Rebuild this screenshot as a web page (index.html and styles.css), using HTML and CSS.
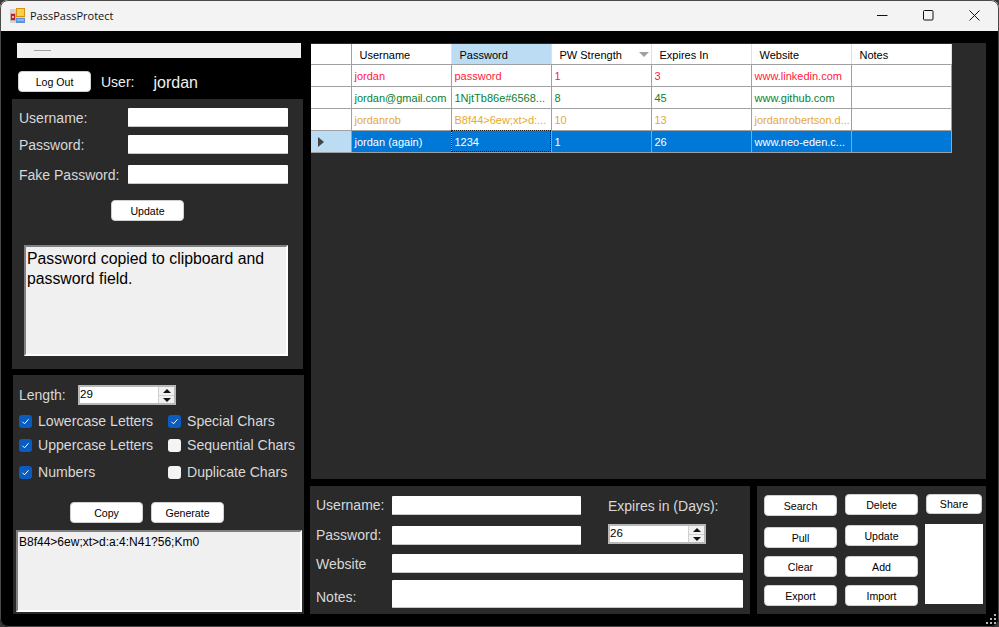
FILE: index.html
```html
<!DOCTYPE html>
<html lang="en">
<head>
    <meta charset="UTF-8">
    <meta name="viewport" content="width=device-width, initial-scale=1.0">
    <title>PassPassProtect</title>
    <link rel="stylesheet" href="styles.css">
</head>
<body>
<div class="window">
    <div class="titlebar">
        <svg class="app-icon" width="15" height="15" viewBox="0 0 15 15">
            <rect x="0" y="1" width="15" height="14" fill="#d4d4d4"/>
            <rect x="0" y="5" width="6" height="8" fill="#b8b8b8"/>
            <rect x="1" y="6" width="4" height="6" fill="#c42020"/>
            <rect x="2" y="8" width="2" height="2" fill="#f0c0a0"/>
            <rect x="6" y="0" width="9" height="9" fill="#d89010"/>
            <rect x="7" y="1" width="7" height="7" fill="#f8d050"/>
            <rect x="6" y="10" width="9" height="5" fill="#6090d8"/>
            <rect x="7" y="11" width="7" height="2" fill="#90b8f0"/>
        </svg>
        <span class="app-title">PassPassProtect</span>
        <div class="window-controls">
            <svg class="win-btn" width="11" height="11" viewBox="0 0 11 11"><path d="M0 5.5h10.5" stroke="#111" fill="none"/></svg>
            <svg class="win-btn" width="11" height="11" viewBox="0 0 11 11"><rect x=".5" y=".5" width="9.5" height="9.5" rx="1" stroke="#111" fill="none"/></svg>
            <svg class="win-btn" width="11" height="11" viewBox="0 0 11 11"><path d="M.5.5l10 10M10.5.5l-10 10" stroke="#111" fill="none"/></svg>
        </div>
    </div>

    <div class="content">
        <div class="left-col">
            <div class="menu-strip"><span class="menu-dash"></span></div>
            <div class="user-bar">
                <button class="btn">Log Out</button>
                <span class="user-label">User:</span>
                <span class="user-name">jordan</span>
            </div>

            <div class="panel account-panel">
                <div class="field-row row-user"><label>Username:</label><input type="text" class="text-input"></div>
                <div class="field-row row-pass"><label>Password:</label><input type="text" class="text-input"></div>
                <div class="field-row row-fake"><label>Fake Password:</label><input type="text" class="text-input"></div>
                <button class="btn update-btn">Update</button>
                <div class="message-box">Password copied to clipboard and password field.</div>
            </div>

            <div class="panel generator-panel">
                <div class="length-row">
                    <label>Length:</label>
                    <div class="spinner">
                        <span class="spinner-value">29</span>
                        <span class="spinner-arrows"><i class="arrow-up"></i><i class="arrow-down"></i></span>
                    </div>
                </div>
                <div class="check-grid">
                    <div class="check-item"><span class="check on"><svg width="9" height="9" viewBox="0 0 9 9"><path d="M1.5 4.8l2 2 4-4.5" stroke="#fff" fill="none"/></svg></span>Lowercase Letters</div>
                    <div class="check-item"><span class="check on"><svg width="9" height="9" viewBox="0 0 9 9"><path d="M1.5 4.8l2 2 4-4.5" stroke="#fff" fill="none"/></svg></span>Special Chars</div>
                    <div class="check-item"><span class="check on"><svg width="9" height="9" viewBox="0 0 9 9"><path d="M1.5 4.8l2 2 4-4.5" stroke="#fff" fill="none"/></svg></span>Uppercase Letters</div>
                    <div class="check-item"><span class="check"></span>Sequential Chars</div>
                    <div class="check-item check-last"><span class="check on"><svg width="9" height="9" viewBox="0 0 9 9"><path d="M1.5 4.8l2 2 4-4.5" stroke="#fff" fill="none"/></svg></span>Numbers</div>
                    <div class="check-item check-last"><span class="check"></span>Duplicate Chars</div>
                </div>
                <div class="generate-row">
                    <button class="btn">Copy</button>
                    <button class="btn">Generate</button>
                </div>
                <div class="output-box">B8f44&gt;6ew;xt&gt;d:a:4:N41?56;Km0</div>
            </div>
        </div>

        <div class="right-col">
            <div class="panel grid-panel">
                <table class="data-grid">
                    <thead>
                        <tr>
                            <th class="row-head"></th>
                            <th>Username</th>
                            <th class="col-selected">Password</th>
                            <th class="sorted">PW Strength<i class="sort-arrow"></i></th>
                            <th>Expires In</th>
                            <th>Website</th>
                            <th>Notes</th>
                        </tr>
                    </thead>
                    <tbody>
                        <tr class="weak">
                            <td class="row-head"></td>
                            <td>jordan</td><td>password</td><td>1</td><td>3</td><td>www.linkedin.com</td><td></td>
                        </tr>
                        <tr class="strong">
                            <td class="row-head"></td>
                            <td>jordan@gmail.com</td><td>1NjtTb86e#6568...</td><td>8</td><td>45</td><td>www.github.com</td><td></td>
                        </tr>
                        <tr class="expiring">
                            <td class="row-head"></td>
                            <td>jordanrob</td><td>B8f44&gt;6ew;xt&gt;d:...</td><td>10</td><td>13</td><td>jordanrobertson.d...</td><td></td>
                        </tr>
                        <tr class="selected">
                            <td class="row-head"><i class="row-arrow"></i></td>
                            <td>jordan (again)</td><td class="cell-focus">1234</td><td>1</td><td>26</td><td>www.neo-eden.c...</td><td></td>
                        </tr>
                    </tbody>
                </table>
            </div>

            <div class="bottom-row">
                <div class="panel entry-panel">
                    <div class="entry-top">
                        <div class="entry-labels">
                            <div class="entry-row entry-user"><label>Username:</label><input type="text" class="text-input short-input"></div>
                            <div class="entry-row entry-pass"><label>Password:</label><input type="text" class="text-input short-input"></div>
                        </div>
                        <div class="expires-box">
                            <label>Expires in (Days):</label>
                            <div class="spinner">
                                <span class="spinner-value">26</span>
                                <span class="spinner-arrows"><i class="arrow-up"></i><i class="arrow-down"></i></span>
                            </div>
                        </div>
                    </div>
                    <div class="entry-row entry-site"><label>Website</label><input type="text" class="text-input wide-input"></div>
                    <div class="entry-row entry-notes"><label>Notes:</label><input type="text" class="text-input wide-input notes-input"></div>
                </div>

                <div class="panel action-panel">
                    <div class="action-col col-a">
                        <button class="btn search-btn">Search</button>
                        <button class="btn pull-btn">Pull</button>
                        <button class="btn clear-btn">Clear</button>
                        <button class="btn export-btn">Export</button>
                    </div>
                    <div class="action-col col-b">
                        <button class="btn">Delete</button>
                        <button class="btn update-action">Update</button>
                        <button class="btn clear-btn">Add</button>
                        <button class="btn export-btn">Import</button>
                    </div>
                    <div class="action-col col-c">
                        <button class="btn share-btn">Share</button>
                        <div class="share-list"></div>
                    </div>
                </div>
            </div>
        </div>
    </div>

    <svg class="resize-grip" width="10" height="10" viewBox="0 0 10 10">
        <path d="M8 0h2v2H8zM4 4h2v2H4zM8 4h2v2H8zM0 8h2v2H0zM4 8h2v2H4zM8 8h2v2H8z" fill="#b8b8b8"/>
    </svg>
</div>
</body>
</html>
```

FILE: styles.css
```css
* {
    margin: 0;
    padding: 0;
    box-sizing: border-box;
}

body {
    font-family: "Liberation Sans", Arial, sans-serif;
    background-color: #3a3a3a;
    width: 999px;
    height: 627px;
    overflow: hidden;
}

.window {
    position: relative;
    width: 999px;
    height: 627px;
    background-color: #000;
    border-radius: 8px;
    overflow: hidden;
    display: flex;
    flex-direction: column;
}

/* thin window outline drawn over the title bar and body */
.window::after {
    content: "";
    position: absolute;
    inset: 0;
    border: 1px solid #4a4a4a;
    border-radius: 8px;
    pointer-events: none;
}

.titlebar {
    height: 31px;
    flex: none;
    background-color: #f3f3f3;
    display: flex;
    align-items: center;
    padding-left: 10px;
}

.app-icon {
    flex: none;
}

.app-title {
    font-family: "Open Sans", sans-serif;
    font-size: 11px;
    color: #111;
    margin-left: 5px;
}

.window-controls {
    margin-left: auto;
    display: flex;
    gap: 35px;
    padding-right: 19px;
}

.content {
    flex: 1;
    display: flex;
}

.panel {
    background-color: #2a2a2a;
}

label {
    font-size: 14px;
    color: #d8d8d8;
}

/* left column */

.left-col {
    width: 310px;
    flex: none;
    padding-top: 12px;
}

.menu-strip {
    margin-left: 17px;
    width: 284px;
    height: 15px;
    background-color: #f0f0f0;
    display: flex;
    align-items: center;
    padding-left: 17px;
}

.menu-dash {
    width: 17px;
    height: 1px;
    background-color: #a0a0a0;
}

.btn {
    width: 73px;
    height: 21px;
    background-color: #fff;
    border: 1px solid #d0d0d0;
    border-radius: 4px;
    font-family: "Liberation Sans", Arial, sans-serif;
    font-size: 10.6px;
    color: #000;
    flex: none;
}

.user-bar {
    margin: 13px 0 7px 18px;
    height: 21px;
    display: flex;
    align-items: center;
}

.user-label {
    font-size: 14px;
    color: #f0f0f0;
    margin-left: 10px;
}

.user-name {
    font-size: 16px;
    color: #f0f0f0;
    margin: 2px 0 0 19px;
}

.account-panel {
    margin-left: 12px;
    width: 291px;
    height: 270px;
    padding: 9px 15px 0 7px;
    display: flex;
    flex-direction: column;
}

.field-row {
    display: flex;
    align-items: center;
    justify-content: space-between;
    height: 19px;
}

.row-pass {
    margin-top: 8px;
}

.row-fake {
    margin-top: 11px;
}

.text-input {
    height: 19px;
    width: 160px;
    background-color: #fff;
    border: none;
    border-bottom: 1px solid #c8c8c8;
    border-radius: 1px;
}

.update-btn {
    margin: 16px 0 0 92px;
}

.message-box {
    margin: 24px 0 0 5px;
    width: 264px;
    height: 111px;
    background-color: #f0f0f0;
    border: 2px solid;
    border-color: #808080 #fff #fff #808080;
    padding: 2px 1px;
    font-size: 15.8px;
    line-height: 20px;
    color: #000;
}

.generator-panel {
    margin: 6px 0 0 13px;
    width: 291px;
    height: 239px;
    padding: 10px 0 0 6px;
}

.length-row {
    display: flex;
    align-items: center;
    height: 20px;
}

.length-row label {
    width: 59px;
}

.spinner {
    width: 98px;
    height: 20px;
    background-color: #fff;
    border: 2px solid #b8b8b8;
    display: flex;
    justify-content: space-between;
    font-size: 11.5px;
    line-height: 15px;
    color: #000;
}

.spinner-arrows {
    width: 16px;
    display: flex;
    flex-direction: column;
    gap: 1px;
    background-color: #d0d0d0;
    border-left: 1px solid #d0d0d0;
}

.spinner-arrows i {
    flex: 1;
    background-color: #f0f0f0;
    position: relative;
}

.spinner-arrows i::after {
    content: "";
    position: absolute;
    left: 4px;
    top: 2px;
    border-left: 4px solid transparent;
    border-right: 4px solid transparent;
}

.arrow-up::after {
    border-bottom: 4px solid #111;
}

.arrow-down::after {
    border-top: 4px solid #111;
}

.check-grid {
    margin-top: 4px;
    display: grid;
    grid-template-columns: 149px 1fr;
    grid-auto-rows: 24px;
}

.check-item {
    display: flex;
    align-items: center;
    font-size: 14.1px;
    color: #d8d8d8;
    white-space: nowrap;
}

.check-last {
    height: 24px;
    margin-top: 3px;
}

.check {
    width: 13px;
    height: 13px;
    border-radius: 3px;
    background-color: #f4f4f4;
    margin-right: 6px;
    display: flex;
    align-items: center;
    justify-content: center;
    flex: none;
}

.check.on {
    background-color: #0a5cc0;
}

.generate-row {
    margin: 21px 0 0 51px;
    display: flex;
    gap: 8px;
}

.output-box {
    margin: 7px 0 0 -3px;
    width: 286px;
    height: 82px;
    background-color: #f0f0f0;
    border: 2px solid;
    border-color: #808080 #fff #fff #808080;
    padding: 3px 1px;
    font-size: 12px;
    line-height: 14px;
    color: #000;
}

/* right column */

.right-col {
    flex: 1;
    padding: 12px 13px 0 1px;
}

.grid-panel {
    height: 436px;
    padding-top: 1px;
}

.data-grid {
    border-collapse: collapse;
    table-layout: fixed;
    width: 640px;
    font-size: 11px;
    background-color: #fff;
}

.data-grid th {
    width: 100px;
    height: 20px;
    font-weight: normal;
    text-align: left;
    padding: 2px 0 0 8px;
    color: #000;
    border-right: 1px solid #e0e0e0;
    border-bottom: 1px solid #a0a0a0;
    position: relative;
}

.data-grid th.row-head {
    width: 40px;
    border-right-color: #a0a0a0;
}

.data-grid th.col-selected {
    background-color: #bcdcf4;
}

.sort-arrow {
    position: absolute;
    right: 2px;
    top: 8px;
    border-left: 5px solid transparent;
    border-right: 5px solid transparent;
    border-top: 5px solid #a0a0a0;
}

.data-grid td {
    height: 22px;
    padding: 1px 0 0 3px;
    white-space: nowrap;
    overflow: hidden;
    border-right: 1px solid #a0a0a0;
    border-bottom: 1px solid #a0a0a0;
}

.weak td {
    color: #ff1a3c;
}

.strong td {
    color: #0a8030;
}

.expiring td {
    color: #e6a832;
}

.selected td {
    background-color: #0078d7;
    color: #fff;
}

.data-grid td.row-head {
    background-color: #fff;
}

.selected td.row-head {
    background-color: #bcdcf4;
}

.row-arrow {
    display: block;
    margin-left: 4px;
    width: 0;
    border-top: 5px solid transparent;
    border-bottom: 5px solid transparent;
    border-left: 6px solid #444;
}

.data-grid td.cell-focus {
    outline: 1px dotted #1a1a1a;
    outline-offset: -1px;
}

.bottom-row {
    margin-top: 7px;
    display: flex;
    gap: 7px;
    height: 128px;
}

.entry-panel {
    margin-left: -1px;
    width: 440px;
    padding: 10px 0 0 6px;
}

.entry-top {
    display: flex;
    height: 58px;
}

.entry-labels {
    width: 292px;
}

.entry-labels label {
    padding-bottom: 2px;
}

.entry-row {
    display: flex;
    align-items: center;
}

.entry-row label {
    width: 76px;
    flex: none;
}

.entry-pass {
    margin-top: 11px;
}

.short-input {
    width: 189px;
}

.wide-input {
    width: 351px;
}

.entry-notes {
    margin-top: 7px;
}

.entry-notes label {
    padding-top: 6px;
}

.notes-input {
    height: 28px;
}

.expires-box {
    display: flex;
    flex-direction: column;
    gap: 10px;
    padding-top: 2px;
}

.action-panel {
    width: 229px;
    display: flex;
    padding-left: 7px;
}

.action-col {
    display: flex;
    flex-direction: column;
    align-items: flex-start;
}

.col-a {
    width: 81px;
    padding-top: 9px;
}

.col-b {
    width: 81px;
    padding-top: 8px;
}

.col-c {
    padding-top: 8px;
}

.pull-btn {
    margin-top: 11px;
}

.update-action {
    margin-top: 10px;
}

.clear-btn {
    margin-top: 8px;
}

.col-b .clear-btn {
    margin-top: 10px;
}

.export-btn {
    margin-top: 8px;
}

.share-btn {
    width: 56px;
    height: 20px;
}

.share-list {
    width: 58px;
    height: 80px;
    margin: 10px 0 0 -1px;
    background-color: #fff;
}

/* grip sits over the window corner */
.resize-grip {
    position: absolute;
    right: 3px;
    bottom: 3px;
}
```
